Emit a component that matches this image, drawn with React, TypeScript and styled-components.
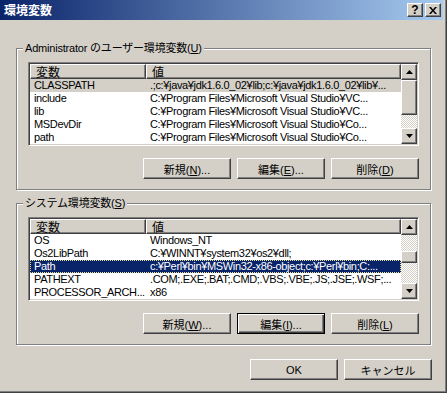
import React from 'react';
import styled, { createGlobalStyle, css } from 'styled-components';

const GlobalStyle = createGlobalStyle`
  html, body {
    margin: 0;
    padding: 0;
    background: #d4d0c8;
    overflow: hidden;
  }
  body {
    font-family: "Liberation Sans", "Noto Sans CJK JP", sans-serif;
    font-size: 11px;
    letter-spacing: -0.2px;
    color: #000;
  }
`;

const bevel = css`
  border: 1px solid;
  border-color: #fff #404040 #404040 #fff;
  box-shadow: inset -1px -1px #808080;
  background: #d4d0c8;
`;

const Window = styled.div`
  box-sizing: border-box;
  width: 451px;
  height: 397px;
  margin: -4px 0 0 -4px;
  padding: 3px;
  border: 1px solid;
  border-color: #d4d0c8 #404040 #404040 #d4d0c8;
  box-shadow: inset 1px 1px #fff, inset -1px -1px #808080;
  background: #d4d0c8;
  display: flex;
  flex-direction: column;
`;

const TitleBar = styled.div`
  height: 20px;
  display: flex;
  align-items: center;
  padding: 0 2px 0 4px;
  background: linear-gradient(to right, #0a246a, #a6caf0);
  color: #fff;
  font-family: "Noto Sans CJK JP", sans-serif;
  font-size: 12px;
  font-weight: bold;
  letter-spacing: 0;
`;

const TitleText = styled.div`
  flex: 1;
  line-height: 20px;
`;

const CaptionButton = styled.div<{ $gap?: number }>`
  ${bevel};
  box-sizing: border-box;
  width: 16px;
  height: 14px;
  margin-left: ${p => p.$gap ?? 0}px;
  display: flex;
  align-items: center;
  justify-content: center;
  color: #000;
  font-family: "Liberation Sans", sans-serif;
  font-size: 12px;
  font-weight: bold;
  line-height: 12px;
`;

const Body = styled.div`
  display: flex;
  flex-direction: column;
  padding: 22px 11px 0 16px;
`;

const Group = styled.fieldset<{ $top?: number }>`
  margin: ${p => p.$top ?? 0}px 1px 0 0;
  padding: 7px 11px 10px;
  border: 1px solid #808080;
  box-shadow: 1px 1px 0 #fff, inset 1px 1px 0 #fff;
  min-width: 0;
`;

const Legend = styled.legend`
  margin-left: -5px;
  padding: 0 2px;
  line-height: 13px;
  background: #d4d0c8;
`;

const ListBox = styled.div`
  box-sizing: border-box;
  height: 84px;
  display: flex;
  padding: 1px;
  border: 1px solid;
  border-color: #808080 #fff #fff #808080;
  box-shadow: inset 1px 1px #404040, inset -1px -1px #d4d0c8;
  background: #fff;
`;

const ListBody = styled.div`
  flex: 1;
  min-width: 0;
  display: flex;
  flex-direction: column;
  overflow: hidden;
`;

const Header = styled.div`
  display: flex;
  height: 15px;
  flex-shrink: 0;
`;

const HeaderCell = styled.div<{ $w?: number }>`
  ${bevel};
  box-sizing: border-box;
  ${p => (p.$w ? `width: ${p.$w}px;` : 'flex: 1;')}
  padding-left: 5px;
  font-family: "Noto Sans CJK JP", sans-serif;
  font-size: 12px;
  line-height: 13px;
  letter-spacing: 0;
`;

const Row = styled.div<{ $sel?: 'active' | 'inactive' }>`
  display: flex;
  height: 13px;
  flex-shrink: 0;
  line-height: 13px;
  ${p =>
    p.$sel === 'active' &&
    css`
      background: #0a246a;
      color: #fff;
      outline: 1px dotted #e8e090;
      outline-offset: -1px;
    `}
  ${p => p.$sel === 'inactive' && 'background: #d4d0c8;'}
`;

const Cell = styled.div<{ $w?: number }>`
  box-sizing: border-box;
  ${p => (p.$w ? `width: ${p.$w}px;` : 'flex: 1;')}
  padding-left: 4px;
  white-space: nowrap;
  overflow: hidden;
  letter-spacing: -0.35px;
`;

const ScrollBar = styled.div`
  width: 16px;
  display: flex;
  flex-direction: column;
`;

const ScrollButton = styled.div`
  ${bevel};
  box-sizing: border-box;
  height: 16px;
  display: flex;
  align-items: center;
  justify-content: center;
`;

const Track = styled.div<{ $h: number }>`
  height: ${p => p.$h}px;
  background-color: #d4d0c8;
  background-image: conic-gradient(#fff 25%, #d4d0c8 0 50%, #fff 0 75%, #d4d0c8 0);
  background-size: 2px 2px;
`;

const Thumb = styled.div<{ $h: number }>`
  ${bevel};
  box-sizing: border-box;
  height: ${p => p.$h}px;
`;

const ButtonRow = styled.div<{ $top: number }>`
  display: flex;
  justify-content: flex-end;
  gap: 6px;
  margin-top: ${p => p.$top}px;
`;

const Button = styled.button<{ $default?: boolean }>`
  box-sizing: border-box;
  width: 88px;
  height: 21px;
  padding: 0;
  font-family: "Liberation Sans", "Noto Sans CJK JP", sans-serif;
  font-size: 11px;
  color: #000;
  ${bevel};
  ${p =>
    p.$default &&
    css`
      border-color: #000;
      box-shadow: inset 1px 1px #fff, inset -1px -1px #404040, inset -2px -2px #808080;
    `}
`;

const Arrow = ({ down }: { down?: boolean }) => (
  <svg width="7" height="4" viewBox="0 0 7 4">
    <path d={down ? 'M0 0h7L3.5 4z' : 'M3.5 0L7 4H0z'} fill="#000" />
  </svg>
);

type Item = { name: string; value: string; sel?: 'active' | 'inactive' };

const userVars: Item[] = [
  { name: 'CLASSPATH', value: '.;c:¥java¥jdk1.6.0_02¥lib;c:¥java¥jdk1.6.0_02¥lib¥...', sel: 'inactive' },
  { name: 'include', value: 'C:¥Program Files¥Microsoft Visual Studio¥VC...' },
  { name: 'lib', value: 'C:¥Program Files¥Microsoft Visual Studio¥VC...' },
  { name: 'MSDevDir', value: 'C:¥Program Files¥Microsoft Visual Studio¥Co...' },
  { name: 'path', value: 'C:¥Program Files¥Microsoft Visual Studio¥Co...' },
];

const systemVars: Item[] = [
  { name: 'OS', value: 'Windows_NT' },
  { name: 'Os2LibPath', value: 'C:¥WINNT¥system32¥os2¥dll;' },
  { name: 'Path', value: 'c:¥Perl¥bin¥MSWin32-x86-object;c:¥Perl¥bin;C:...', sel: 'active' },
  { name: 'PATHEXT', value: '.COM;.EXE;.BAT;.CMD;.VBS;.VBE;.JS;.JSE;.WSF;...' },
  { name: 'PROCESSOR_ARCH...', value: 'x86' },
];

const VarList = ({ items, before, thumb }: { items: Item[]; before: number; thumb: number }) => (
  <ListBox>
    <ListBody>
      <Header>
        <HeaderCell $w={116}>変数</HeaderCell>
        <HeaderCell>値</HeaderCell>
      </Header>
      {items.map(it => (
        <Row key={it.name} $sel={it.sel}>
          <Cell $w={116}>{it.name}</Cell>
          <Cell>{it.value}</Cell>
        </Row>
      ))}
    </ListBody>
    <ScrollBar>
      <ScrollButton><Arrow /></ScrollButton>
      <Track $h={before} />
      <Thumb $h={thumb} />
      <Track $h={48 - before - thumb} />
      <ScrollButton><Arrow down /></ScrollButton>
    </ScrollBar>
  </ListBox>
);

const App: React.FC = () => {
  return (
    <>
      <GlobalStyle />
      <Window>
        <TitleBar>
          <TitleText>環境変数</TitleText>
          <CaptionButton>?</CaptionButton>
          <CaptionButton $gap={2}>
            <svg width="8" height="7" viewBox="0 0 8 7">
              <path d="M0 0h2l2 2.5L6 0h2L5 3.5 8 7H6L4 4.5 2 7H0l3-3.5z" fill="#000" />
            </svg>
          </CaptionButton>
        </TitleBar>
        <Body>
          <Group>
            <Legend>Administrator のユーザー環境変数(<u>U</u>)</Legend>
            <VarList items={userVars} before={0} thumb={35} />
            <ButtonRow $top={12}>
              <Button>新規(<u>N</u>)...</Button>
              <Button>編集(<u>E</u>)...</Button>
              <Button>削除(<u>D</u>)</Button>
            </ButtonRow>
          </Group>
          <Group $top={7}>
            <Legend>システム環境変数(<u>S</u>)</Legend>
            <VarList items={systemVars} before={16} thumb={12} />
            <ButtonRow $top={12}>
              <Button>新規(<u>W</u>)...</Button>
              <Button $default>編集(<u>I</u>)...</Button>
              <Button>削除(<u>L</u>)</Button>
            </ButtonRow>
          </Group>
          <ButtonRow $top={14}>
            <Button>OK</Button>
            <Button>キャンセル</Button>
          </ButtonRow>
        </Body>
      </Window>
    </>
  );
};

export default App;
